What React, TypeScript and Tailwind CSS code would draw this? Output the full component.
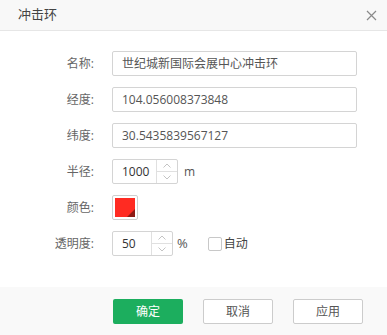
import React from 'react';

const font = { fontFamily: '"Open Sans", "Noto Sans CJK SC", sans-serif' };

const Label: React.FC<{ text: string }> = ({ text }) => (
  <div className="w-[95px] shrink-0 text-right text-[12px] text-[#666] pr-[1px]">{text}</div>
);

const Spinner: React.FC<{ value: string; width: string }> = ({ value, width }) => (
  <div className={`${width} h-[25px] flex border border-[#d4d4d4] rounded-[2px] bg-white`}>
    <div className="flex-1 flex items-center pl-[9px] text-[12px] text-[#333]">{value}</div>
    <div className="w-[21px] flex flex-col border-l border-[#e0e0e0]">
      <div className="flex-1 flex items-center justify-center border-b border-[#e0e0e0]">
        <svg width="8" height="5" viewBox="0 0 8 5"><path d="M0.5 4.5L4 1L7.5 4.5" fill="none" stroke="#c4c4c4" strokeWidth="1" /></svg>
      </div>
      <div className="flex-1 flex items-center justify-center">
        <svg width="8" height="5" viewBox="0 0 8 5"><path d="M0.5 0.5L4 4L7.5 0.5" fill="none" stroke="#c4c4c4" strokeWidth="1" /></svg>
      </div>
    </div>
  </div>
);

const TextInput: React.FC<{ value: string }> = ({ value }) => (
  <div className="w-[245px] h-[25px] flex items-center pl-[9px] border border-[#d4d4d4] rounded-[2px] text-[12px] text-[#555] bg-white">
    {value}
  </div>
);

export default function App() {
  return (
    <div className="w-[387px] h-[335px] flex flex-col bg-white overflow-hidden" style={font}>
      {/* Header */}
      <div className="h-[31px] shrink-0 flex items-center justify-between pl-[18px] pr-[9px] bg-[#f8f8f8] border-b border-[#e6e6e6]">
        <span className="text-[13px] text-[#444]">冲击环</span>
        <svg width="11" height="11" viewBox="0 0 11 11" className="mr-[1px]">
          <path d="M1 1L10 10M10 1L1 10" stroke="#8a8a8a" strokeWidth="1.2" />
        </svg>
      </div>

      {/* Body */}
      <div className="flex-1 flex flex-col gap-[11px] pt-[20px]">
        <div className="flex items-center gap-[17px]">
          <Label text="名称:" />
          <TextInput value="世纪城新国际会展中心冲击环" />
        </div>
        <div className="flex items-center gap-[17px]">
          <Label text="经度:" />
          <TextInput value="104.056008373848" />
        </div>
        <div className="flex items-center gap-[17px]">
          <Label text="纬度:" />
          <TextInput value="30.5435839567127" />
        </div>
        <div className="flex items-center gap-[17px]">
          <Label text="半径:" />
          <Spinner value="1000" width="w-[66px]" />
          <span className="-ml-[11px] text-[12px] text-[#555]">m</span>
        </div>
        <div className="flex items-center gap-[17px]">
          <Label text="颜色:" />
          <div className="w-[26px] h-[25px] p-[2px] border border-[#cfcfcf] rounded-[2px] bg-white">
            <div className="w-full h-full bg-[#ff2b22] relative overflow-hidden">
              <div className="absolute right-0 bottom-0 w-0 h-0 border-l-[8px] border-l-transparent border-b-[8px] border-b-[#8e1a14]" />
            </div>
          </div>
        </div>
        <div className="flex items-center gap-[17px]">
          <Label text="透明度:" />
          <div className="flex items-center">
            <Spinner value="50" width="w-[61px]" />
            <span className="ml-[4px] text-[13px] text-[#555]">%</span>
            <div className="ml-[20px] w-[14px] h-[14px] border border-[#c8c8c8] rounded-[2px] bg-white" />
            <span className="ml-[2px] text-[12px] text-[#444]">自动</span>
          </div>
        </div>
      </div>

      {/* Footer */}
      <div className="h-[48px] shrink-0 flex items-start gap-[20px] pt-[12px] pl-[113px] bg-[#f9f9f9]">
        <button className="w-[70px] h-[25px] rounded-[2px] bg-[#1cae5e] text-white text-[12px]">确定</button>
        <button className="w-[70px] h-[25px] rounded-[2px] bg-white border border-[#cccccc] text-[#555] text-[12px]">取消</button>
        <button className="w-[70px] h-[25px] rounded-[2px] bg-white border border-[#cccccc] text-[#555] text-[12px]">应用</button>
      </div>
    </div>
  );
}
